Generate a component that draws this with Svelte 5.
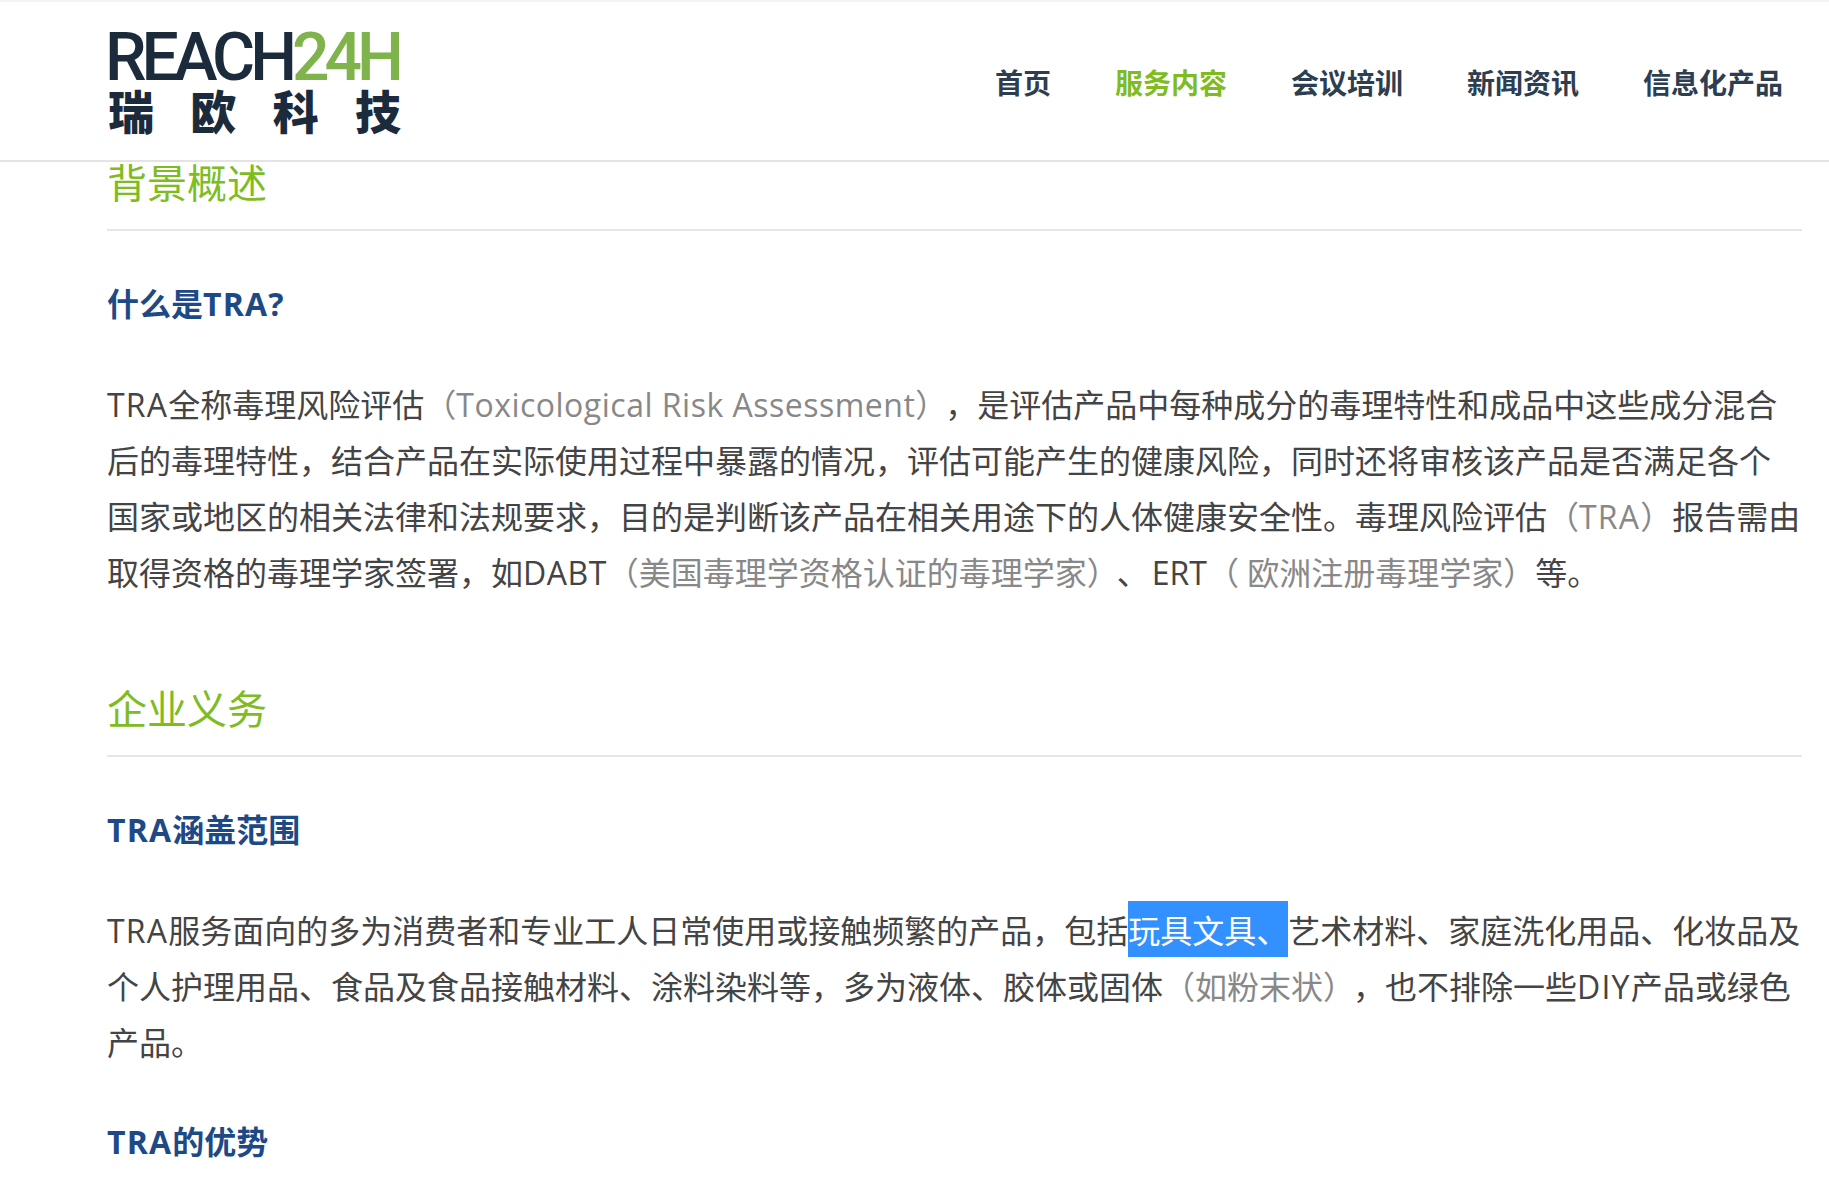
<script>
	const nav = [
		{ label: '首页' },
		{ label: '服务内容', active: true },
		{ label: '会议培训' },
		{ label: '新闻资讯' },
		{ label: '信息化产品' }
	];
</script>

<div class="page">
	<header>
		<div class="logo">
			<div class="brand">REACH<span>24H</span></div>
			<div class="brand-cn"><span>瑞</span><span>欧</span><span>科</span><span>技</span></div>
		</div>
		<nav>
			{#each nav as item}
				<a href="#top" class:active={item.active}>{item.label}</a>
			{/each}
		</nav>
	</header>

	<main>
		<h2 class="first">背景概述</h2>
		<h3>什么是<span class="en">TRA?</span></h3>
		<p>
			<span class="en">TRA</span>全称毒理风险评估<i class="wide">（<span class="latin">Toxicological Risk Assessment</span>）</i>，是评估产品中每种成分的毒理特性和成品中这些成分混合<br>
			后的毒理特性，结合产品在实际使用过程中暴露的情况，评估可能产生的健康风险，同时还将审核该产品是否满足各个<br>
			国家或地区的相关法律和法规要求，目的是判断该产品在相关用途下的人体健康安全性。毒理风险评估<i>（<span class="en">TRA</span>）</i>报告需由<br>
			取得资格的毒理学家签署，如<span class="latin">DABT</span><i class="wide">（美国毒理学资格认证的毒理学家）</i>、<span class="ert">ERT</span><i>（ 欧洲注册毒理学家）</i>等。
		</p>

		<h2>企业义务</h2>
		<h3><span class="en">TRA</span>涵盖范围</h3>
		<p>
			<span class="en">TRA</span>服务面向的多为消费者和专业工人日常使用或接触频繁的产品，包括<mark>玩具文具、</mark>艺术材料、家庭洗化用品、化妆品及<br>
			个人护理用品、食品及食品接触材料、涂料染料等，多为液体、胶体或固体<i class="wide">（如粉末状）</i>，也不排除一些<span class="en">DIY</span>产品或绿色<br>
			产品。
		</p>
		<h3><span class="en">TRA</span>的优势</h3>
	</main>
</div>

<style>
	:global(body) {
		background: #fff;
	}

	.page {
		height: 1188px;
		overflow: hidden;
		font-family: "Open Sans", "Noto Sans CJK SC", sans-serif;
		color: #444;
	}

	header {
		height: 158px;
		display: flex;
		justify-content: space-between;
		align-items: center;
		padding: 0 46px 0 108px;
		border-top: 2px solid #f3f3f3;
		border-bottom: 2px solid #e4e4e4;
	}

	.logo {
		width: 293px;
	}

	.brand {
		margin: 4px 0 0 -3px;
		font-family: Roboto, sans-serif;
		font-size: 66px;
		line-height: 50px;
		font-weight: 500;
		letter-spacing: -5px;
		color: #1b2b3c;
		white-space: nowrap;
	}

	.brand span {
		color: #7fb34b;
	}

	.brand-cn {
		display: flex;
		justify-content: space-between;
		margin-top: 2px;
		font-family: "Noto Sans CJK SC", sans-serif;
		font-size: 46px;
		line-height: 48px;
		font-weight: 900;
		color: #1b2b3c;
	}

	nav {
		display: flex;
		gap: 64px;
		margin-top: 2px;
	}

	nav a {
		font-family: "Noto Sans CJK SC", sans-serif;
		font-size: 28px;
		font-weight: 700;
		color: #2c3e50;
		text-decoration: none;
	}

	nav a.active {
		color: #7ebc1f;
	}

	main {
		padding: 0 27px 0 107px;
	}

	h2 {
		margin: 0;
		padding-bottom: 21px;
		font-size: 40px;
		line-height: 50px;
		font-weight: 400;
		color: #7ebc1f;
		border-bottom: 2px solid #e6e6e6;
	}

	h2.first {
		margin-top: -4px;
	}

	h3 {
		margin: 0;
		padding: 49px 0 49px;
		font-size: 32px;
		line-height: 48px;
		font-weight: 700;
		color: #1d4a86;
	}

	p {
		margin: 0;
		font-size: 32px;
		line-height: 56px;
		white-space: nowrap;
	}

	p + h2 {
		margin-top: 83px;
	}

	p + h3 {
		padding-top: 47px;
	}

	i {
		font-style: normal;
		color: #888;
	}

	.wide {
		padding-right: 14px;
	}

	/* Latin runs are a little wider in the original font */
	.en {
		letter-spacing: 1.2px;
	}

	.latin {
		letter-spacing: 0.5px;
	}

	.ert {
		margin-left: 3px;
	}

	mark {
		display: inline-block;
		margin-top: -2px;
		padding-top: 4px;
		line-height: 52px;
		background: #3390ff;
		color: #fff;
	}
</style>
